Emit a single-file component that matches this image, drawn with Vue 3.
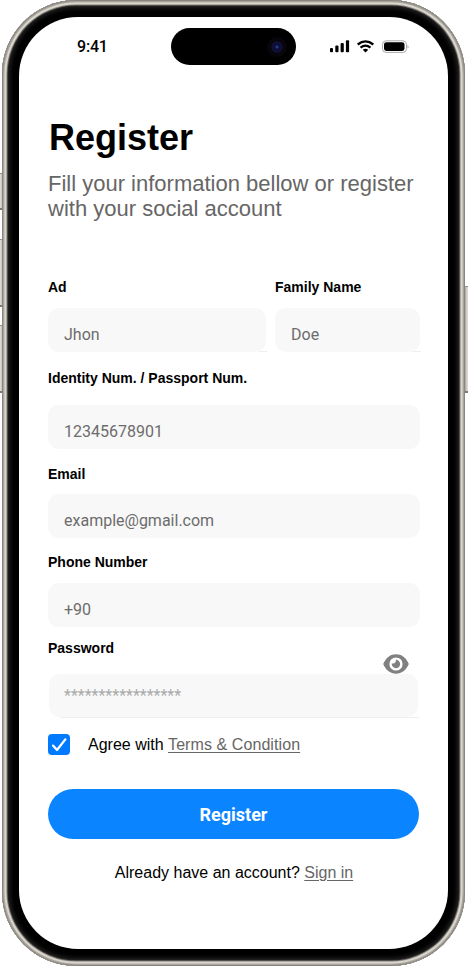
<script setup>
import { ref } from 'vue'

const agreed = ref(true)
const fields = [
  { key: 'ad', label: 'Ad', value: 'Jhon' },
  { key: 'family', label: 'Family Name', value: 'Doe' },
  { key: 'identity', label: 'Identity Num. / Passport Num.', value: '12345678901' },
  { key: 'email', label: 'Email', value: 'example@gmail.com' },
  { key: 'phone', label: 'Phone Number', value: '+90' },
  { key: 'password', label: 'Password', value: '*****************' }
]
</script>

<template>
  <div class="stage">
    <i class="side mute"></i>
    <i class="side up"></i>
    <i class="side down"></i>
    <i class="side power"></i>
    <div class="device">
      <div class="screen">
        <header class="status">
          <span class="time">9:41</span>
          <div class="island"><i class="lens"></i></div>
          <svg class="indicators" width="80" height="14" viewBox="0 0 80 14">
            <rect x="0" y="8" width="3" height="4.2" rx="1" />
            <rect x="5.3" y="5.6" width="3.2" height="6.6" rx="1" />
            <rect x="10.6" y="3" width="3.2" height="9.2" rx="1" />
            <rect x="15.9" y="0.2" width="3.2" height="12" rx="1" />
            <g fill="none" stroke="#000" stroke-width="2.3">
              <path d="M27.7 4.5 Q35.5 -1.8 43.3 4.5" />
              <path d="M30.5 7.6 Q35.5 3.6 40.5 7.6" />
            </g>
            <path d="M32.7 9.7 Q35.5 7.7 38.3 9.7 L35.5 12.4Z" />
            <rect x="52.5" y="0.8" width="24" height="11.6" rx="3.6" fill="none" stroke="#aaa" />
            <rect x="54" y="2.2" width="20.5" height="8.8" rx="2.4" />
            <path d="M77.6 4.6 Q79.4 6.6 77.6 8.6Z" fill="#999" />
          </svg>
        </header>

        <main class="content">
          <h1>Register</h1>
          <p class="intro">Fill your information bellow or register<br />with your social account</p>

          <form class="form" @submit.prevent>
            <div v-for="f in fields" :key="f.key" class="field" :class="f.key">
              <div class="label">
                <label>{{ f.label }}</label>
                <svg v-if="f.key === 'password'" class="eye" width="26" height="20" viewBox="0 0 26 20">
                  <path d="M0.2 10 C3 3.5 7.5 0.3 13 0.3 S23 3.5 25.8 10 C23 16.5 18.5 19.7 13 19.7 S3 16.5 0.2 10Z" fill="#808080" />
                  <circle cx="13" cy="10" r="6.6" fill="#fff" />
                  <path d="M13 5.8 A4.2 4.2 0 1 1 8.8 9.4 Q12.8 10.4 13 5.8Z" fill="#808080" />
                </svg>
              </div>
              <div class="box">{{ f.value }}</div>
            </div>
          </form>

          <div class="agree">
            <button class="check" type="button" @click="agreed = !agreed">
              <svg v-if="agreed" width="22" height="21" viewBox="0 0 22 21">
                <path d="M5 11.6 L9 16 L17.3 5.4" fill="none" stroke="#fff" stroke-width="2.3" stroke-linecap="round" stroke-linejoin="round" />
              </svg>
            </button>
            <span>Agree with <a class="terms">Terms &amp; Condition</a></span>
          </div>

          <button class="submit" type="button">Register</button>
          <p class="signin">Already have an account? <a>Sign in</a></p>
        </main>
      </div>
    </div>
  </div>
</template>

<style>
body {
  background: #fff;
  overflow: hidden;
}
</style>

<style scoped>
* {
  box-sizing: border-box;
}
.stage {
  position: relative;
  width: 468px;
  height: 966px;
  padding-left: 2px;
  overflow: hidden;
  background: #fff;
  font-family: "Liberation Sans", Arial, sans-serif;
  color: #000;
}
.side {
  position: absolute;
  left: 0;
  width: 4px;
  background: linear-gradient(90deg, #e2e0dd, #c5c2bd 50%, #77746f);
  border-top: 1px solid #96938e;
  border-bottom: 2px solid #7c7973;
}
.mute { top: 173px; height: 37px; }
.up { top: 239px; height: 68px; }
.down { top: 325px; height: 68px; }
.power {
  left: auto;
  right: 0;
  top: 286px;
  height: 107px;
  background: linear-gradient(270deg, #e2e0dd, #c5c2bd 50%, #77746f);
}
.device {
  position: relative;
  width: 463px;
  height: 966px;
  padding: 17px;
  border-radius: 74px;
  background: #000;
  box-shadow:
    inset 0 0 1px 1px #85827c,
    inset 0 0 1px 2.5px #aaa69f,
    inset 0 0 1px 4.5px #e2dfd7,
    inset 0 0 1px 5.5px #77736c,
    inset 0 0 4px 8px #222;
}
.screen {
  width: 429px;
  height: 932px;
  border-radius: 59px;
  background: #fff;
  overflow: hidden;
}
.status {
  display: flex;
  height: 60px;
  padding: 11px 0 0 58px;
}
.time {
  width: 94px;
  padding-top: 9px;
  font: 500 16px/20px Roboto, sans-serif;
  letter-spacing: -0.2px;
}
.island {
  display: flex;
  align-items: center;
  justify-content: flex-end;
  width: 125px;
  height: 37px;
  padding-right: 13px;
  border-radius: 19px;
  background: #000;
}
.lens {
  width: 12px;
  height: 12px;
  border-radius: 50%;
  background: radial-gradient(circle, #253a88 0 1px, #0a0c30 2px, #12123a 5px, #07071a 6px);
  box-shadow: 0 0 0 4px #08050b;
}
.indicators {
  margin: 12px 0 0 34px;
}
.content {
  padding: 0 29px;
}
h1 {
  margin: 40px 0 0 1px;
  font-size: 36px;
  line-height: 42px;
}
.intro {
  margin: 12px -20px 0 0;
  font-size: 22px;
  line-height: 25px;
  color: #666;
  white-space: nowrap;
}
.form {
  display: grid;
  grid-template-columns: 218px 144.5px;
  column-gap: 9px;
  margin-top: 58px;
}
.field {
  grid-column: 1 / -1;
}
.ad,
.family {
  grid-column: auto;
}
.label {
  display: flex;
  justify-content: space-between;
  height: 29px;
  font-size: 14px;
  font-weight: 700;
  line-height: 16px;
}
.box {
  position: relative;
  height: 44px;
  padding: 17px 16px 0;
  border-radius: 11px;
  background: #f8f8f8;
  color: #6c6c6c;
  font: 16px/20px Roboto, sans-serif;
}
.ad .box::after,
.family .box::after,
.password .box::after {
  content: "";
  position: absolute;
  z-index: 0;
  right: -1px;
  bottom: 0;
  width: 8px;
  height: 1px;
  background: #eeeeee;
}
.identity { padding-top: 18px; }
.identity .label { height: 35px; }
.email { padding-top: 17px; }
.email .label { height: 28px; }
.phone { padding-top: 16px; }
.password { padding-top: 13px; }
.password .label { height: 34px; }
.password .box {
  height: 43px;
  margin: 0 2px 0 1px;
  padding: 12px 15px 0;
  color: #aaa;
}
.password .box::after {
  left: 11px;
  width: auto;
  bottom: -1px;
}
.eye {
  margin: 14px 10.5px 0 0;
}
.agree {
  display: flex;
  align-items: center;
  gap: 18px;
  margin-top: 17px;
  height: 21px;
  font-size: 16px;
  line-height: 20px;
}
.check {
  width: 22px;
  height: 21px;
  padding: 0;
  border: 0;
  border-radius: 4px;
  background: #007aff;
}
.check svg {
  display: block;
}
a {
  color: #666;
  text-decoration: underline;
  text-underline-offset: 2px;
}
.terms {
  letter-spacing: 0.08px;
}
.submit {
  display: block;
  width: 371px;
  height: 50px;
  margin-top: 34px;
  padding: 1px 0 0;
  border: 0;
  border-radius: 25px;
  background: #0a84ff;
  color: #fff;
  font: 700 18px/20px Roboto, sans-serif;
}
.signin {
  margin: 24px 0 0 1px;
  font-size: 16px;
  line-height: 20px;
  text-align: center;
}
</style>
